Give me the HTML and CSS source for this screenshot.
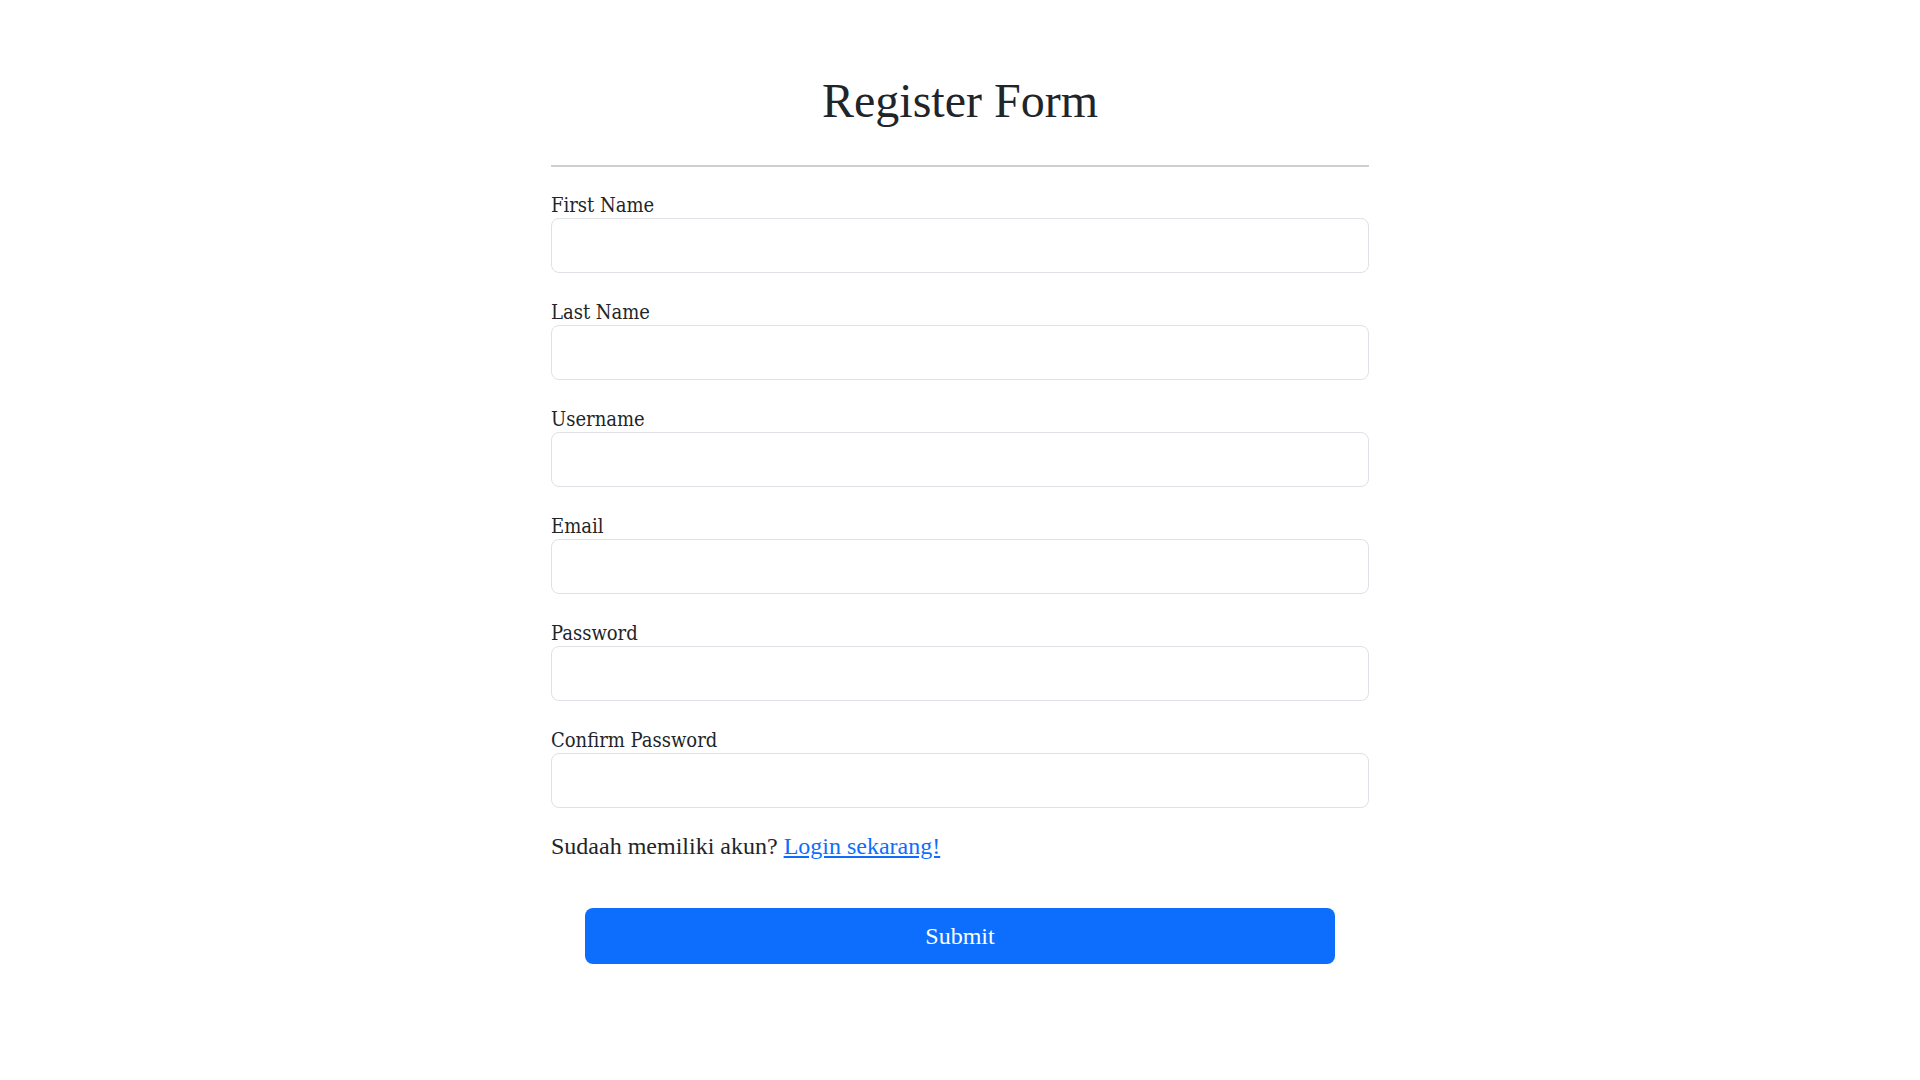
FILE: index.html
```html
<!DOCTYPE html>
<html lang="id">
<head>
<meta charset="utf-8">
<title>Register Form</title>
<link rel="stylesheet" href="styles.css">
</head>
<body>
<main class="wrap">
  <h1 class="title">Register Form</h1>
  <hr class="divider">
  <form class="form">
    <div class="group">
      <label class="label" for="fn">First Name</label>
      <input class="input" id="fn" type="text">
    </div>
    <div class="group">
      <label class="label" for="ln">Last Name</label>
      <input class="input" id="ln" type="text">
    </div>
    <div class="group">
      <label class="label" for="un">Username</label>
      <input class="input" id="un" type="text">
    </div>
    <div class="group">
      <label class="label" for="em">Email</label>
      <input class="input" id="em" type="email">
    </div>
    <div class="group">
      <label class="label" for="pw">Password</label>
      <input class="input" id="pw" type="password">
    </div>
    <div class="group">
      <label class="label" for="cpw">Confirm Password</label>
      <input class="input" id="cpw" type="password">
    </div>
    <p class="note">Sudaah memiliki akun? <a class="link" href="#">Login sekarang!</a></p>
    <button class="submit" type="button">Submit</button>
  </form>
</main>
</body>
</html>
```
FILE: styles.css
```css
html, body {
  margin: 0;
  padding: 0;
  background: #fff;
}
body {
  font-family: "Liberation Serif", "Times New Roman", serif;
  color: #212529;
}
.wrap {
  width: 818px;
  margin: 0 auto;
  padding-top: 72px;
}
.title {
  margin: 0;
  font-size: 48px;
  line-height: 58px;
  font-weight: 400;
  text-align: center;
}
.divider {
  margin: 35px 0 0;
  border: 0;
  border-top: 2px solid #cfcfcf;
  height: 0;
}
.form {
  display: flex;
  flex-direction: column;
}
.group {
  display: flex;
  flex-direction: column;
  gap: 1px;
  margin-top: 27px;
}
.group:first-child {
  margin-top: 26px;
}
.label {
  font-family: "DejaVu Serif", serif;
  font-stretch: condensed;
  font-size: 20px;
  line-height: 24px;
  color: #212529;
}
.input {
  box-sizing: border-box;
  height: 55px;
  width: 100%;
  border: 1px solid #dee2e6;
  border-radius: 8px;
  background: #fff;
  padding: 0 16px;
  font-size: 20px;
  outline: none;
}
.note {
  margin: 24px 0 0;
  font-size: 24px;
  line-height: 28px;
}
.link {
  color: #0d6efd;
  text-decoration: underline;
}
.submit {
  margin: 48px auto 0;
  width: 750px;
  height: 56px;
  border: 0;
  border-radius: 8px;
  background: #0d6efd;
  color: #fff;
  font-family: "Liberation Serif", "Times New Roman", serif;
  font-size: 24px;
  cursor: pointer;
}
```
